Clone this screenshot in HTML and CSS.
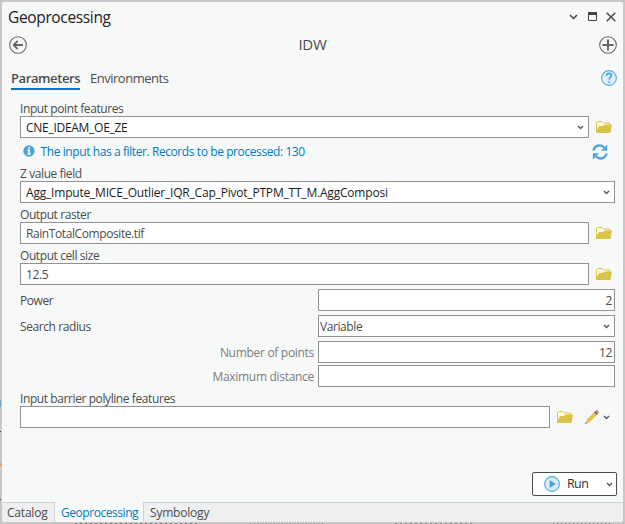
FILE: index.html
```html
<!DOCTYPE html>
<html lang="en">
<head>
<meta charset="utf-8">
<title>Geoprocessing</title>
<link rel="stylesheet" href="styles.css">
</head>
<body>
<svg width="0" height="0" class="defs">
  <symbol id="folder" viewBox="0 0 16 12">
    <path d="M.5 11V2L2 .5h4L7.5 2h6v2" fill="#fffbe0" stroke="#dbc54b"/>
    <path d="M0 12V11L3 5h4l1.5-1.5H16L14.5 12z" fill="#d9c349"/>
  </symbol>
  <symbol id="chevron" viewBox="0 0 7 5"><path d="M1 1l2.5 2.5L6 1" fill="none" stroke="currentColor" stroke-width="1.4"/></symbol>
</svg>
<main class="pane">
  <header class="titlebar">
    <h1>Geoprocessing</h1>
    <div class="window-actions">
      <svg width="9" height="6" viewBox="0 0 9 6"><path d="M1 1l3.5 3.5L8 1" fill="none" stroke="#444" stroke-width="1.5"/></svg>
      <svg width="9" height="9" viewBox="0 0 9 9"><path d="M.5.5h8v8h-8z" fill="none" stroke="#444"/><path d="M0 0h9v3H0z" fill="#444"/></svg>
      <svg width="10" height="10" viewBox="0 0 10 10"><path d="M.7.7l8.6 8.6M9.3.7L.7 9.3" stroke="#444" stroke-width="1.4"/></svg>
    </div>
  </header>
  <div class="toolbar">
    <svg width="18" height="18" viewBox="0 0 18 18" fill="none" stroke="#666"><circle cx="9" cy="9" r="8.3" stroke-width="1.1"/><path d="M14 9H5M8.7 4.8L4.6 9l4.1 4.2" stroke-width="1.8"/></svg>
    <h2>IDW</h2>
    <svg width="18" height="18" viewBox="0 0 18 18" fill="none" stroke="#666"><circle cx="9" cy="9" r="8.3" stroke-width="1.1"/><path d="M9 3.5v11M3.5 9h11" stroke-width="2"/></svg>
  </div>
  <nav class="tabs">
    <span class="tab active">Parameters</span>
    <span class="tab">Environments</span>
    <svg class="help" width="16" height="16" viewBox="0 0 16 16"><circle cx="8" cy="8" r="7.4" fill="#def0fb" stroke="#55a9df" stroke-width="1.1"/><path d="M5.6 6V4.6Q6.2 3.4 8 3.4q2.4 0 2.4 2c0 1.7-2.2 1.8-2.2 4M8.2 11.3v1.7" fill="none" stroke="#4da3dc" stroke-width="1.7"/></svg>
  </nav>
  <section class="form">
    <label class="tight"><span>Input point features</span></label>
    <div class="row">
      <div class="field dark"><span>CNE_IDEAM_OE_ZE</span><svg class="chev" width="7" height="5"><use href="#chevron"/></svg></div>
      <svg class="folder" width="16" height="12"><use href="#folder"/></svg>
    </div>
    <div class="message">
      <svg width="12" height="12" viewBox="0 0 12 12"><circle cx="6" cy="6" r="5.7" fill="#4fa4dc"/><path d="M5.2 2h1.7v1.6H5.2zM4.4 4.6h2.5v4h.9v1.2H4.3V8.6h.9V5.7h-.8z" fill="#fff"/></svg>
      <span>The input has a filter. Records to be processed: 130</span>
      <svg class="refresh" width="16" height="16" viewBox="0 0 16 16"><path d="M1.4 6.5C2.4 3 4.5 1.6 7.5 1.6c2 0 3.3.6 4.6 1.8M14.6 9.5c-1 3.5-3.1 4.9-6.1 4.9-2 0-3.3-.6-4.6-1.8" fill="none" stroke="#4fa4dc" stroke-width="2.5"/><path d="M15.2.6v6.2H9zM.8 15.4V9.2H7z" fill="#4fa4dc"/></svg>
    </div>
    <label class="tight"><span>Z value field</span></label>
    <div class="field dark"><span class="long-name">Agg_Impute_MICE_Outlier_IQR_Cap_Pivot_PTPM_TT_M.AggComposi</span><svg class="chev" width="7" height="5"><use href="#chevron"/></svg></div>
    <label><span>Output raster</span></label>
    <div class="row"><div class="field"><span>RainTotalComposite.tif</span></div><svg class="folder" width="16" height="12"><use href="#folder"/></svg></div>
    <label><span>Output cell size</span></label>
    <div class="row"><div class="field"><span>12.5</span></div><svg class="folder" width="16" height="12"><use href="#folder"/></svg></div>
    <div class="pairs">
      <div class="pair"><span>Power</span><div class="field number"><span>2</span></div></div>
      <div class="pair"><span>Search radius</span><div class="field choice"><span>Variable</span><svg class="chev" width="7" height="5"><use href="#chevron"/></svg></div></div>
      <div class="pair sub"><span>Number of points</span><div class="field number"><span>12</span></div></div>
      <div class="pair sub last"><span>Maximum distance</span><div class="field"></div></div>
    </div>
    <label><span>Input barrier polyline features</span></label>
    <div class="row barrier">
      <div class="field"></div>
      <svg class="folder" width="16" height="12"><use href="#folder"/></svg>
      <svg class="pencil" width="14" height="14" viewBox="0 0 14 14"><path d="M.3 13.7l1.3-4 2.7 2.7z" fill="#efb5a0"/><path d="M.2 13.8l.6-1.8 1.2 1.2z" fill="#555"/><path d="M1.6 9.7L9 2.3 11.7 5l-7.4 7.4z" fill="#dbc54b"/><path d="M9 2.3l1.2-1.2 2.7 2.7L11.7 5z" fill="#666"/><path d="M10.2 1.1Q11.8-.4 13.2.8t-.3 3z" fill="#d98173"/></svg>
      <svg class="chev" width="7" height="5"><use href="#chevron"/></svg>
    </div>
  </section>
  <div class="actions">
    <button class="run">
      <svg width="16" height="16" viewBox="0 0 16 16"><circle cx="8" cy="8" r="7.4" fill="#d7ebf8" stroke="#55a9df" stroke-width="1.1"/><path d="M5.7 4l6 4-6 4z" fill="#4ba2db"/></svg>
      <span>Run</span>
      <svg class="chev" width="7" height="5"><use href="#chevron"/></svg>
    </button>
  </div>
  <footer class="dock-tabs">
    <span class="dock catalog">Catalog</span><span class="dock current">Geoprocessing</span><span class="dock symbology">Symbology</span>
  </footer>
</main>
</body>
</html>
```
FILE: styles.css
```css
* { box-sizing: border-box; }
body {
  margin: 0;
  width: 625px;
  height: 524px;
  overflow: hidden;
  /* slivers of the window behind the pane */
  background:
    repeating-linear-gradient(90deg, #777 0 2px, #c2c2c2 2px 5px) 75px 523px / 125px 1px no-repeat,
    repeating-linear-gradient(90deg, #888 0 1px, #c2c2c2 1px 4px) 250px 523px / 76px 1px no-repeat,
    repeating-linear-gradient(90deg, #888 0 2px, #c2c2c2 2px 5px) 395px 523px / 80px 1px no-repeat,
    repeating-linear-gradient(90deg, #777 0 1px, #c2c2c2 1px 4px) 553px 523px / 58px 1px no-repeat,
    linear-gradient(#6ea6cc, #6ea6cc) 0 400px / 1px 7px no-repeat,
    linear-gradient(#444, #444) 0 431px / 1px 1px no-repeat,
    linear-gradient(#d29a5c, #d29a5c) 0 463px / 1px 3px no-repeat,
    linear-gradient(#555, #555) 0 499px / 1px 1px no-repeat,
    #c6c6c6;
  font: 12px/16px "Open Sans", sans-serif;
  letter-spacing: -0.41px;
  color: #4c4c4c;
}
svg { display: block; flex: none; }
.defs { position: absolute; }
.pane {
  height: 523px;
  margin-left: 1px;
  display: flex;
  flex-direction: column;
  border: solid #c8c8c8;
  border-width: 2px 2px 1px 1px;
  border-radius: 4px;
  background: #f7f9f8;
}
h1, h2 { margin: 0; font-weight: 400; }
.titlebar {
  height: 31px;
  display: flex;
  align-items: center;
  justify-content: space-between;
  padding: 0 7px 0 6px;
}
h1 { margin-top: -1px; font-size: 15.5px; line-height: 30px; letter-spacing: -0.35px; color: #222; }
.window-actions { display: flex; align-items: center; gap: 9px; padding-bottom: 2px; }
.window-actions svg:first-child { margin-right: 1px; }
.toolbar {
  height: 24px;
  display: flex;
  align-items: center;
  justify-content: space-between;
  padding: 0 6px 0 7px;
}
h2 { padding: 0 1px 2px 0; font-size: 15px; letter-spacing: -0.3px; }
.tabs {
  height: 33px;
  display: flex;
  gap: 10px;
  padding: 11px 6px 0 9px;
  margin-bottom: 11px;
  font-size: 13px;
}
.tab { height: 22px; line-height: 20px; letter-spacing: -0.49px; }
.tab.active {
  width: 69px;
  font-weight: 600;
  letter-spacing: -0.4px;
  border-bottom: 2px solid #007ac2;
}
.help { margin: 2px 0 0 auto; }
.form { padding: 0 8px 0 18px; }
label { display: flex; height: 19px; padding-top: 4px; white-space: nowrap; }
.tight { height: 15px; padding-top: 0; }
.field {
  height: 22px;
  flex: 1;
  display: flex;
  align-items: center;
  justify-content: space-between;
  padding: 0 4px 0 5px;
  border: 1px solid #929292;
  background: #fff;
  white-space: nowrap;
}
.field span { padding-top: 1px; }
.dark { color: #1c1c1c; letter-spacing: -0.28px; }
.long-name { letter-spacing: -0.2px; }
.chev { color: #555; }
.row { display: flex; align-items: center; padding-right: 3px; }
.folder { margin-left: 7px; }
.message {
  height: 28px;
  display: flex;
  align-items: center;
  padding: 0 7px 0 3px;
  color: #0079c1;
}
.message svg:first-child { margin-top: -2px; }
.message span { margin-left: 5.5px; }
.refresh { margin-left: auto; }
.pairs { display: grid; gap: 4px; padding-top: 4px; }
.pair { display: grid; grid-template-columns: 294px 297px; column-gap: 4px; align-items: center; }
.pair > span { padding-top: 2px; }
.last { margin-top: -2px; }
.sub > span { text-align: right; color: #7c7c7c; letter-spacing: -0.3px; }
.number { justify-content: flex-end; padding-right: 2px; }
.choice { padding-left: 1px; }
.barrier { padding-right: 5px; }
.pencil { margin: 0 4px 0 12px; }
.actions { margin-top: auto; height: 30px; display: flex; justify-content: flex-end; padding-right: 6px; }
.run {
  width: 85px;
  height: 24px;
  display: flex;
  align-items: center;
  padding: 0 3px 0 11px;
  border: 1px solid #4c4c4c;
  border-radius: 2px;
  background: #fff;
  color: #333;
  font: inherit;
  font-size: 12.5px;
  letter-spacing: -0.6px;
}
.run span { margin-left: 7px; }
.run .chev { margin-left: auto; }
.dock-tabs { height: 20px; display: flex; background: #eeeff1; border-top: 1px solid #cfd2d6; border-radius: 0 0 3px 3px; line-height: 20px; letter-spacing: -0.2px; }
.dock { padding-left: 5px; }
.catalog { width: 53px; border-right: 1px solid #cfd2d6; }
.current { width: 89px; margin-top: -1px; padding: 1px 0 0 6px; background: #f7f9f8; border-right: 1px solid #cfd2d6; border-radius: 0 0 3px 3px; color: #0079c1; letter-spacing: -0.45px; }
.symbology { padding-left: 6px; }
```
